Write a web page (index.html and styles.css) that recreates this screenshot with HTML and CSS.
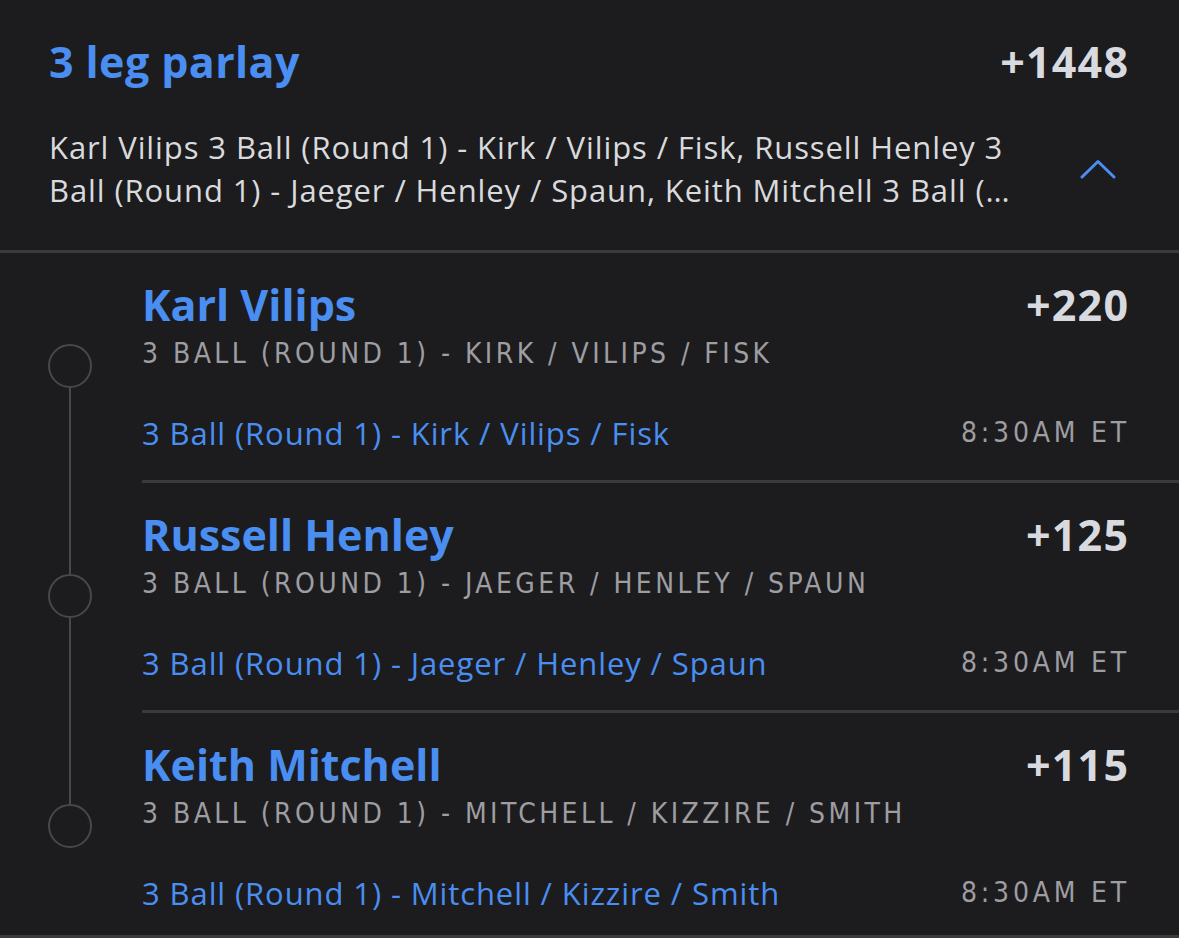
FILE: index.html
```html
<!DOCTYPE html>
<html lang="en">
<head>
<meta charset="utf-8">
<title>3 leg parlay</title>
<link rel="stylesheet" href="styles.css">
</head>
<body>
<div class="card">
  <header class="head">
    <div class="head-row">
      <h1 class="title">3 leg parlay</h1>
      <div class="total-odds">+1448</div>
    </div>
    <div class="summary-row">
      <p class="summary">Karl Vilips 3 Ball (Round 1) - Kirk / Vilips / Fisk, Russell Henley 3 Ball (Round 1) - Jaeger / Henley / Spaun, Keith Mitchell 3 Ball (…</p>
      <svg class="chevron" width="36" height="20" viewBox="0 0 36 20"><path d="M2 18 L18 2.5 L34 18" fill="none" stroke="#4a8ef2" stroke-width="3" stroke-linecap="round" stroke-linejoin="round"/></svg>
    </div>
  </header>

  <div class="legs">
    <div class="leg leg-first">
      <div class="rail"><span class="seg seg-top"></span><span class="dot"></span><span class="seg seg-bottom"></span></div>
      <div class="leg-body">
        <div class="row">
          <div class="pick">Karl Vilips</div>
          <div class="odds">+220</div>
        </div>
        <div class="market">3 Ball (Round 1) - Kirk / Vilips / Fisk</div>
        <div class="row row-event">
          <div class="event">3 Ball (Round 1) - Kirk / Vilips / Fisk</div>
          <div class="time">8:30AM ET</div>
        </div>
      </div>
    </div>

    <div class="leg">
      <div class="rail"><span class="seg seg-top"></span><span class="dot"></span><span class="seg seg-bottom"></span></div>
      <div class="leg-body">
        <div class="row">
          <div class="pick">Russell Henley</div>
          <div class="odds">+125</div>
        </div>
        <div class="market">3 Ball (Round 1) - Jaeger / Henley / Spaun</div>
        <div class="row row-event">
          <div class="event">3 Ball (Round 1) - Jaeger / Henley / Spaun</div>
          <div class="time">8:30AM ET</div>
        </div>
      </div>
    </div>

    <div class="leg leg-last">
      <div class="rail"><span class="seg seg-top"></span><span class="dot"></span><span class="seg seg-bottom"></span></div>
      <div class="leg-body">
        <div class="row">
          <div class="pick">Keith Mitchell</div>
          <div class="odds">+115</div>
        </div>
        <div class="market">3 Ball (Round 1) - Mitchell / Kizzire / Smith</div>
        <div class="row row-event">
          <div class="event">3 Ball (Round 1) - Mitchell / Kizzire / Smith</div>
          <div class="time">8:30AM ET</div>
        </div>
      </div>
    </div>
  </div>
</div>
</body>
</html>
```
FILE: styles.css
```css
* { box-sizing: border-box; }
html, body { margin: 0; padding: 0; background: #1c1c1e; }
body {
  font-family: "Open Sans", Lato, "Noto Sans", sans-serif;
  color: #d9dadd;
  width: 1179px;
  height: 938px;
  overflow: hidden;
}
.card {
  background: #1c1c1e;
  border-bottom: 3px solid #3a3a3c;
}
.head {
  padding: 37px 51px 38px 49px;
  border-bottom: 3px solid #3a3a3c;
}
.head-row {
  display: flex;
  justify-content: space-between;
  align-items: center;
  height: 50px;
}
.title {
  margin: 0;
  font-size: 43px;
  line-height: 50px;
  font-weight: 700;
  letter-spacing: 0.4px;
  color: #4a8ef2;
}
.total-odds {
  font-size: 43px;
  line-height: 50px;
  font-weight: 700;
  letter-spacing: 1.2px;
  margin-right: -1.2px;
  color: #d8dadf;
}
.summary-row {
  margin-top: 39px;
  display: flex;
  align-items: center;
  justify-content: space-between;
}
.summary {
  margin: 0;
  width: 990px;
  font-size: 31px;
  line-height: 43px;
  letter-spacing: 0.9px;
  color: #d9dadd;
  display: -webkit-box;
  -webkit-line-clamp: 2;
  -webkit-box-orient: vertical;
  overflow: hidden;
}
.chevron { margin-right: 12px; flex: none; }

.leg {
  display: flex;
}
.rail {
  flex: none;
  width: 44px;
  margin-left: 48px;
  margin-right: 50px;
  display: flex;
  flex-direction: column;
  align-items: center;
}
.seg { width: 2.5px; background: #48484a; }
.seg-top { height: 91px; flex: none; }
.seg-bottom { flex: 1; }
.leg-first .seg-top { background: transparent; }
.leg-last .seg-bottom { background: transparent; }
.dot {
  flex: none;
  width: 44px;
  height: 44px;
  border-radius: 50%;
  border: 2.5px solid #48484a;
}
.leg-body {
  flex: 1;
  padding: 27px 51px 27px 0;
  border-bottom: 3px solid #3a3a3c;
}
.leg-last .leg-body { border-bottom: none; padding-bottom: 22px; }
.row {
  display: flex;
  justify-content: space-between;
  align-items: center;
}
.pick {
  font-size: 43px;
  line-height: 49px;
  font-weight: 700;
  color: #4a8ef2;
}
.odds {
  font-size: 43px;
  line-height: 49px;
  font-weight: 700;
  letter-spacing: 1.2px;
  margin-right: -1.2px;
  color: #d8dadf;
}
.market {
  margin-top: 5px;
  font-family: "DejaVu Sans Condensed", "DejaVu Sans", sans-serif;
  font-stretch: condensed;
  font-size: 28px;
  line-height: 40px;
  letter-spacing: 3.45px;
  text-transform: uppercase;
  color: #9d9da2;
}
.row-event { margin-top: 39px; height: 40px; }
.event {
  font-size: 31px;
  line-height: 40px;
  letter-spacing: 0.9px;
  color: #4a8ef2;
}
.time {
  font-family: "DejaVu Sans Condensed", "DejaVu Sans", sans-serif;
  font-stretch: condensed;
  font-size: 28px;
  line-height: 40px;
  letter-spacing: 3.8px;
  margin-right: -2px;
  color: #9d9da2;
}
```
